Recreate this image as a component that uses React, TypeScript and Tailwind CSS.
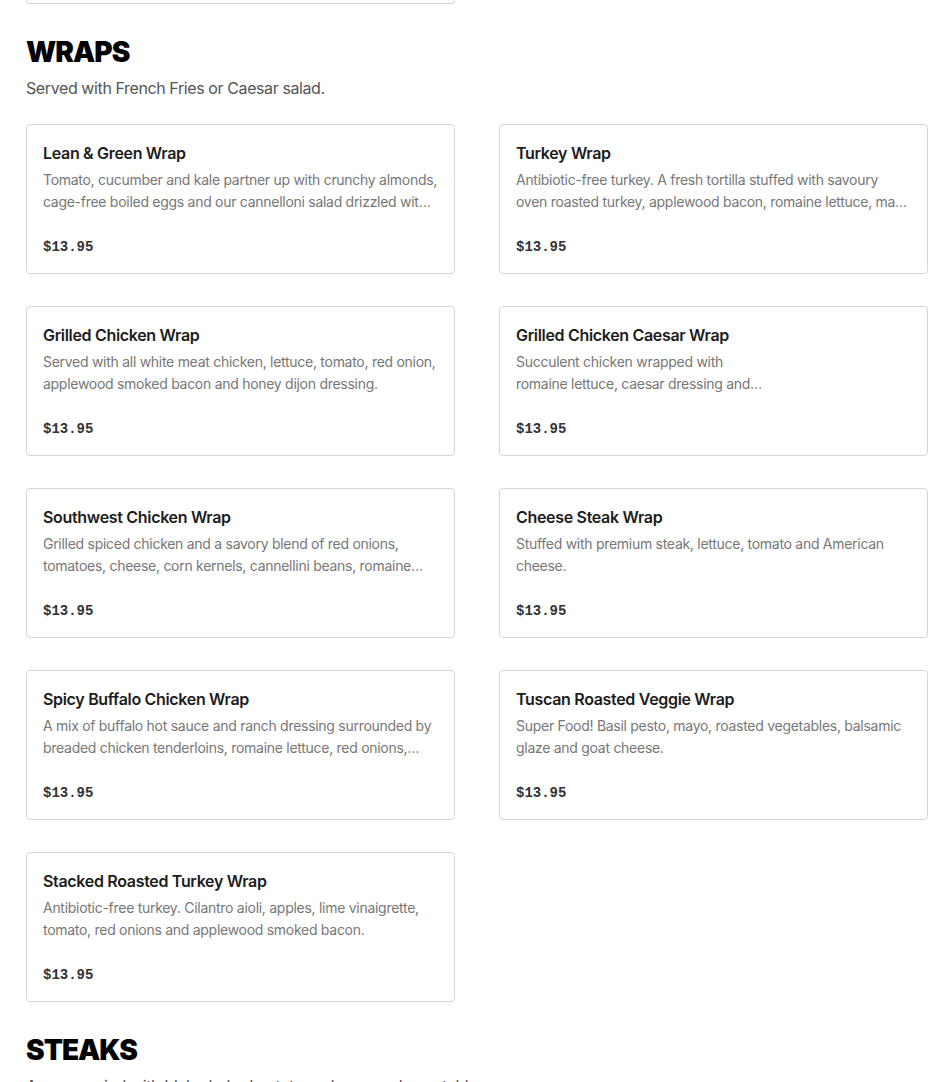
type MenuItem = {
  name: string
  description: string
  price: string
}

const wraps: MenuItem[] = [
  {
    name: 'Lean & Green Wrap',
    description:
      'Tomato, cucumber and kale partner up with crunchy almonds, cage-free boiled eggs and our cannelloni salad drizzled with lemon vinaigrette.',
    price: '$13.95',
  },
  {
    name: 'Turkey Wrap',
    description:
      'Antibiotic-free turkey. A fresh tortilla stuffed with savoury oven roasted turkey, applewood bacon, romaine lettuce, mayo and tomato.',
    price: '$13.95',
  },
  {
    name: 'Grilled Chicken Wrap',
    description:
      'Served with all white meat chicken, lettuce, tomato, red onion, applewood smoked bacon and honey dijon dressing.',
    price: '$13.95',
  },
  {
    name: 'Grilled Chicken Caesar Wrap',
    description:
      'Succulent chicken wrapped with\nromaine lettuce, caesar dressing and\nparmesan cheese.',
    price: '$13.95',
  },
  {
    name: 'Southwest Chicken Wrap',
    description:
      'Grilled spiced chicken and a savory blend of red onions, tomatoes, cheese, corn kernels, cannellini beans, romaine lettuce and chipotle mayo.',
    price: '$13.95',
  },
  {
    name: 'Cheese Steak Wrap',
    description: 'Stuffed with premium steak, lettuce, tomato and American cheese.',
    price: '$13.95',
  },
  {
    name: 'Spicy Buffalo Chicken Wrap',
    description:
      'A mix of buffalo hot sauce and ranch dressing surrounded by breaded chicken tenderloins, romaine lettuce, red onions, tomato and cheddar.',
    price: '$13.95',
  },
  {
    name: 'Tuscan Roasted Veggie Wrap',
    description: 'Super Food! Basil pesto, mayo, roasted vegetables, balsamic glaze and goat cheese.',
    price: '$13.95',
  },
  {
    name: 'Stacked Roasted Turkey Wrap',
    description:
      'Antibiotic-free turkey. Cilantro aioli, apples, lime vinaigrette, tomato, red onions and applewood smoked bacon.',
    price: '$13.95',
  },
]

function MenuCard({ item }: { item: MenuItem }) {
  return (
    <div className="flex h-[150px] flex-col rounded-[4px] border border-[#d6d6d6] bg-white px-4 pt-4 pb-4">
      <h3 className="text-[16px] leading-[24px] font-semibold tracking-[-0.02em] text-[#1c1c1c]">
        {item.name}
      </h3>
      <p className="mt-1 line-clamp-2 text-[14px] leading-[22px] tracking-[-0.02em] whitespace-pre-line text-[#777777]">
        {item.description}
      </p>
      <div
        className="mt-auto text-[14px] leading-[20px] font-bold text-[#333333]"
        style={{ fontFamily: '"Liberation Mono", monospace' }}
      >
        {item.price}
      </div>
    </div>
  )
}

export default function App() {
  return (
    <div
      className="h-[1082px] w-[950px] overflow-hidden bg-white pl-[26px]"
      style={{ fontFamily: 'Inter, "Noto Sans", sans-serif' }}
    >
      <div className="w-[902px]">
        {/* tail of previous section */}
        <div className="grid grid-cols-2 gap-x-[44px]">
          <div className="h-[4px] rounded-b-[4px] border-x border-b border-[#d6d6d6]" />
        </div>

        {/* wraps */}
        <section className="mt-8">
          <h2 className="text-[28px] leading-[32px] font-black tracking-[-0.035em] text-black uppercase">
            Wraps
          </h2>
          <p className="mt-2 text-[16px] leading-[24px] tracking-[-0.025em] text-[#555555]">
            Served with French Fries or Caesar salad.
          </p>
          <div className="mt-6 grid grid-cols-2 gap-x-[44px] gap-y-8">
            {wraps.map((item) => (
              <MenuCard key={item.name} item={item} />
            ))}
          </div>
        </section>

        {/* steaks */}
        <section className="mt-8">
          <h2 className="text-[28px] leading-[32px] font-black tracking-[-0.035em] text-black uppercase">
            Steaks
          </h2>
          <p className="mt-2 text-[16px] leading-[24px] tracking-[-0.025em] text-[#555555]">
            Accompanied with Idaho baked potato and seasonal vegetables.
          </p>
        </section>
      </div>
    </div>
  )
}
